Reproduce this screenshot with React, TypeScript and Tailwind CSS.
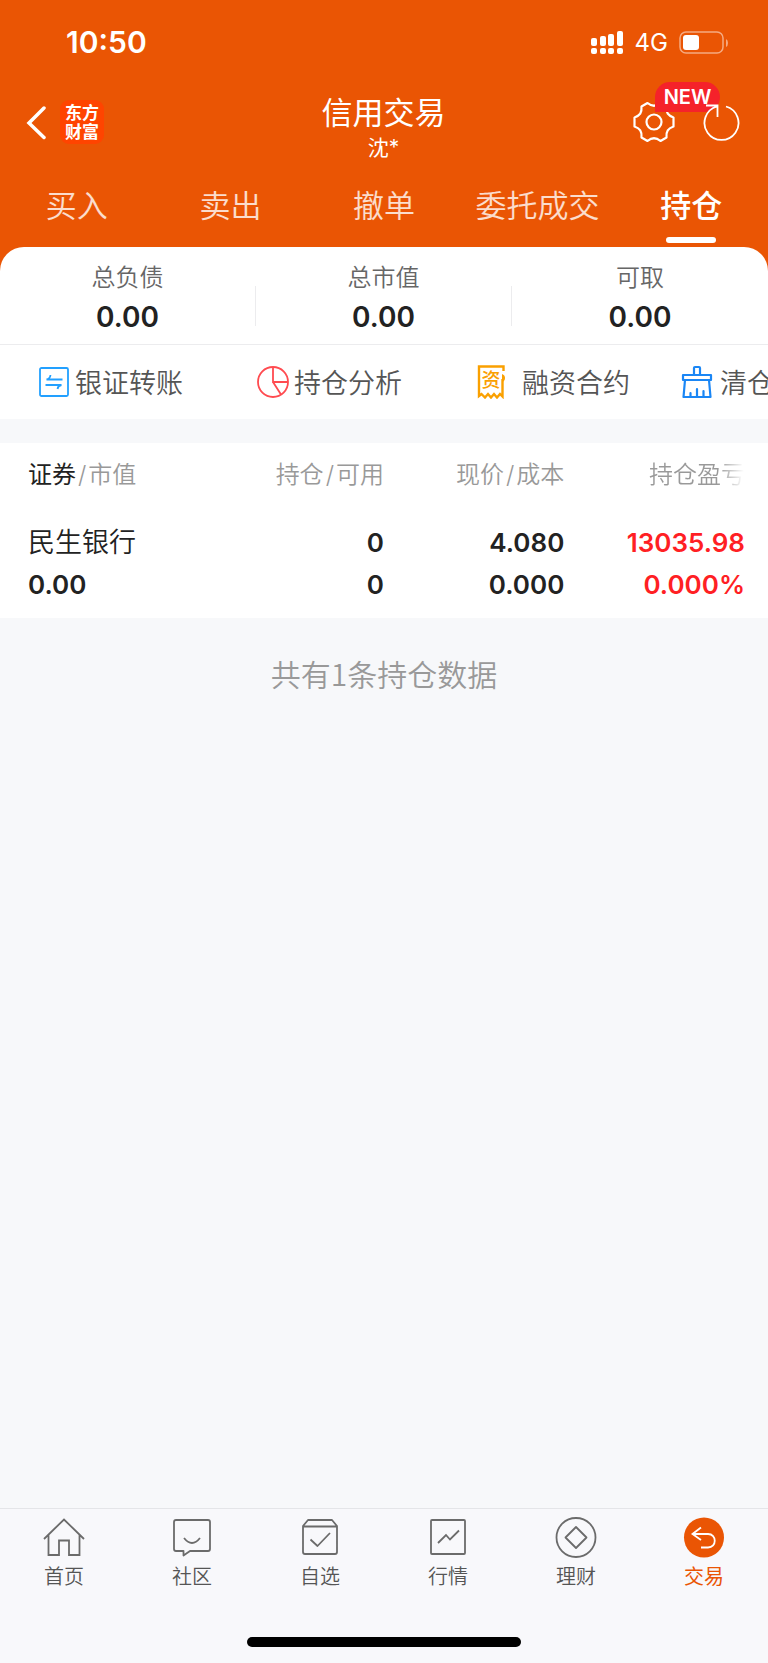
import { useState } from "react";

const tabs = ["买入", "卖出", "撤单", "委托成交", "持仓"];

const totais = [
    { nome: "总负债", valor: "0.00" },
    { nome: "总市值", valor: "0.00" },
    { nome: "可取", valor: "0.00" },
];

const IconTransfer = () => (
    <svg width="30" height="30" viewBox="0 0 30 30" fill="none" stroke="#22a0ff" strokeWidth="1.8">
        <rect x="1" y="1" width="28" height="28" rx="1.5" />
        <path d="M23.500 12.500H7.500Q11 12 11.500 8M6.500 18h16Q19 18.500 18.500 22" />
    </svg>
);

const IconPie = () => (
    <svg width="32" height="32" viewBox="0 0 32 32" fill="none" stroke="#ff4b50" strokeWidth="1.8">
        <circle cx="16" cy="16" r="15" />
        <path d="M16 1v15h15M16 16l8 12.500" />
    </svg>
);

const IconContract = () => (
    <svg width="30" height="34" viewBox="0 0 30 34" fill="none" stroke="#faa000" strokeWidth="2.4">
        <path d="M28.500 6V1.500H4V31l2.500-2 3.500 3.500 3-3.500 3 3.500 3-3.500 3 3.500 3-3.500 2.500 2.500V14" />
        <path d="M27 9q3 1 3 4t-3 4z" fill="#faa000" stroke="none" />
        <text x="16" y="22" textAnchor="middle" fontSize="19" fontWeight="500" fill="#faa000" stroke="none">资</text>
    </svg>
);

const IconBrush = () => (
    <svg width="32" height="34" viewBox="0 0 32 34" fill="none" stroke="#1a86f5" strokeWidth="2.2" strokeLinejoin="round" strokeLinecap="round">
        <path d="M13 10V3q0-1 1-1h4q1 0 1 1v7M2 10h28v5H2zM4 15L2.500 32h27L28 15M9.500 32v-4M16 32v-8M22.500 32v-6" />
    </svg>
);

const IconHome = () => (
    <svg width="44" height="44" viewBox="0 0 44 44" fill="none" stroke="#6b6b6b" strokeWidth="1.8">
        <path d="M2 22L22 2.500 42 22M6.500 18v20H17V23.500h10V38h10.500V18" />
    </svg>
);

const IconChat = () => (
    <svg width="44" height="44" viewBox="0 0 44 44" fill="none" stroke="#6b6b6b" strokeWidth="1.8" strokeLinejoin="round">
        <path d="M6 3h32q2 0 2 2v27q0 2-2 2H20l-6.500 4.500V34H6q-2 0-2-2V5q0-2 2-2z" />
        <path d="M14 21q8 10 16 0" />
    </svg>
);

const IconBox = () => (
    <svg width="44" height="44" viewBox="0 0 44 44" fill="none" stroke="#6b6b6b" strokeWidth="1.8" strokeLinejoin="round">
        <path d="M5 9l5-6h24l5 6v26q0 2-2 2H7q-2 0-2-2zM5 9.500h34M12.500 22.500l7 6.500 12.500-13" />
    </svg>
);

const IconChart = () => (
    <svg width="44" height="44" viewBox="0 0 44 44" fill="none" stroke="#6b6b6b" strokeWidth="1.8">
        <rect x="5" y="3" width="34" height="34" rx="1" />
        <path d="M12 26l8-8 4 4.500 9-9" />
    </svg>
);

const IconWealth = () => (
    <svg width="44" height="44" viewBox="0 0 44 44" fill="none" stroke="#6b6b6b" strokeWidth="1.8" strokeLinejoin="round">
        <circle cx="22" cy="20.500" r="19.500" />
        <path d="M22 10l10.500 10.500L22 31 11.500 20.500z" />
    </svg>
);

const IconTrade = () => (
    <svg width="44" height="44" viewBox="0 0 44 44" fill="none" stroke="#fff" strokeWidth="1.800">
        <circle cx="22" cy="20.500" r="20" fill="#ea5504" stroke="none" />
        <path d="M19 10.500L10.500 17l8.500 6M10.500 17H26c9 0 9 13.500 0 13.500h-7" />
    </svg>
);

const atalhos = [
    { nome: "银证转账", icone: <IconTransfer />, classe: "w-[218px] gap-[6px]" },
    { nome: "持仓分析", icone: <IconPie />, classe: "w-[218px] gap-[5px]" },
    { nome: "融资合约", icone: <IconContract />, classe: "w-[206px] gap-[17px]" },
    { nome: "清仓股票", icone: <IconBrush />, classe: "w-[218px] gap-[7px]" },
];

const menu = [
    { nome: "首页", icone: <IconHome /> },
    { nome: "社区", icone: <IconChat /> },
    { nome: "自选", icone: <IconBox /> },
    { nome: "行情", icone: <IconChart /> },
    { nome: "理财", icone: <IconWealth /> },
    { nome: "交易", icone: <IconTrade /> },
];

const StatusBar = () => (
    <div className="flex h-[85px] items-center justify-between pl-[66px] pr-[39px]">
        <span className="text-[30px] font-semibold">10:50</span>
        <div className="flex items-center gap-[11px]">
            <svg width="33" height="24" viewBox="0 0 33 24" fill="#fff">
                <rect x="0" y="7" width="6" height="8" rx="2" />
                <rect x="9" y="5" width="6" height="10" rx="2" />
                <rect x="17" y="3" width="6" height="12" rx="2" />
                <rect x="26" y="0" width="6" height="15" rx="2" />
                <rect x="0" y="17" width="6" height="6" rx="2" />
                <rect x="9" y="17" width="6" height="6" rx="2" />
                <rect x="17" y="17" width="6" height="6" rx="2" />
                <rect x="26" y="17" width="6" height="6" rx="2" />
            </svg>
            <span className="text-2xl">4G</span>
            <svg width="50" height="24" viewBox="0 0 50 24" fill="none">
                <rect x="1" y="1" width="43" height="21" rx="6" stroke="#fff" strokeOpacity="0.5" strokeWidth="1.500" />
                <rect x="4" y="4" width="16" height="15" rx="3" fill="#fff" />
                <path d="M47 8q2 1 2 4t-2 4z" fill="#fff" fillOpacity="0.5" />
            </svg>
        </div>
    </div>
);

const Cabecalho = () => (
    <div className="grid h-[84px] grid-cols-3 items-start pl-[26px] pr-[27px]">
        <div className="flex items-center gap-[14px] pt-[15px]">
            <button type="button" aria-label="返回">
                <svg width="20" height="44" viewBox="0 0 20 44" fill="none" stroke="#fff" strokeWidth="3.500" strokeLinecap="round">
                    <path d="M18 8L3 23l15 14.500" />
                </svg>
            </button>
            <div className="flex size-11 items-center justify-center rounded-[9px] bg-[#ff4400] pb-[2px] text-center font-['Noto_Sans_CJK_SC',sans-serif] text-[17px] font-bold leading-[19px]">
                东方<br />财富
            </div>
        </div>
        <div className="flex flex-col items-center pt-[7px]">
            <h1 className="text-[31px] leading-[42px]">信用交易</h1>
            <p className="text-[21px] leading-[28px]">沈*</p>
        </div>
        <div className="flex justify-end gap-[27px] pt-[15px]">
            <button type="button" aria-label="设置" className="relative">
                <svg width="44" height="44" viewBox="-22 -22 44 44" fill="none" stroke="#fff" strokeWidth="2.200" strokeLinejoin="round">
                    <path d="M-6.500-19Q0-13.500 6.500-19L12.500-15.500C12-9 14-6.500 19.500-4.500V4.500C14 6.500 12 9 12.500 15.500L6.500 19Q0 13.500-6.500 19L-12.500 15.500C-12 9-14 6.500-19.500 4.500V-4.500C-14-6.500-12-9-12.500-15.500Z" />
                    <circle r="7.500" />
                </svg>
                <span className="absolute -top-[18px] left-[23px] flex h-[30px] w-[65px] items-center justify-center rounded-[15px] rounded-bl-none bg-[#f5222a] text-[20px] font-semibold">NEW</span>
            </button>
            <button type="button" aria-label="刷新" className="relative">
                <svg width="38" height="44" viewBox="0 0 38 44" fill="none" stroke="#fff" strokeWidth="1.800">
                    <path d="M23 6.500A17 17 0 1 1 14 6.500M3 5.500h11.500V17" />
                </svg>
            </button>
        </div>
    </div>
);

const App = () => {
    const [ativa, setAtiva] = useState("持仓");

    return (
        <div className="flex min-h-screen flex-col bg-[#f7f8fa] font-['Inter','Noto_Sans_CJK_SC',sans-serif] font-normal text-[#222]">
            <header className="bg-[#ea5504] text-white">
                <StatusBar />
                <Cabecalho />
                <nav className="flex h-[78px]">
                    {tabs.map((tab) => (
                        <button
                            key={tab}
                            type="button"
                            onClick={() => setAtiva(tab)}
                            className={`flex flex-1 basis-0 flex-col items-center justify-between whitespace-nowrap pb-1 pt-[15px] text-[31px] leading-[44px] ${tab === ativa ? "font-medium" : "font-[350] text-white/80"}`}
                        >
                            {tab}
                            {tab === ativa && <span className="h-[6px] w-[50px] rounded-full bg-white" />}
                        </button>
                    ))}
                </nav>
            </header>

            <div className="bg-[#ea5504]">
                <section className="flex h-[98px] rounded-t-3xl border-b border-[#ececee] bg-white">
                    {totais.map((total, key) => (
                        <div key={key} className="flex flex-1 items-center">
                            <dl className="flex-1 pt-[3px] text-center">
                                <dt className="text-2xl leading-[40px] font-[350] text-[#666]">{total.nome}</dt>
                                <dd className="text-[28px] leading-[38px] font-semibold">{total.valor}</dd>
                            </dl>
                            {key < 2 && <span className="mt-5 h-10 w-px bg-[#ececee]" />}
                        </div>
                    ))}
                </section>
            </div>

            <section className="flex h-[74px] items-center overflow-hidden bg-white pl-[39px]">
                {atalhos.map((atalho) => (
                    <button key={atalho.nome} type="button" className={`flex shrink-0 items-center whitespace-nowrap text-[27px] leading-[38px] font-[350] text-[#555] ${atalho.classe}`}>
                        {atalho.icone}
                        <span className="pt-[3px]">{atalho.nome}</span>
                    </button>
                ))}
            </section>

            <section className="mt-6 bg-white pb-3">
                <table className="w-full table-fixed text-right">
                    <thead>
                        <tr className="h-16 text-2xl text-[#999]">
                            <th className="w-[26%] pl-[28px] text-left font-[350]">
                                <span className="font-normal text-[#222]">证券</span><span className="mx-[2px]">/</span>市值
                            </th>
                            <th className="w-[24%] font-[350]">持仓<span className="mx-[2px]">/</span>可用</th>
                            <th className="w-[24%] pr-1 font-[350]">现价<span className="mx-[2px]">/</span>成本</th>
                            <th className="bg-linear-to-r from-[#999] from-75% to-white to-88% bg-clip-text pr-[23px] font-[350] text-transparent">持仓盈亏</th>
                        </tr>
                    </thead>
                    <tbody className="text-[26px] leading-[42px] font-semibold">
                        <tr>
                            <td className="pl-[28px] pt-[15px] text-left text-[27px] font-[350]">民生银行</td>
                            <td className="pt-[15px]">0</td>
                            <td className="pr-1 pt-[15px]">4.080</td>
                            <td className="pr-[23px] pt-[15px] text-[#ff1f24]">13035.98</td>
                        </tr>
                        <tr>
                            <td className="pl-[28px] text-left">0.00</td>
                            <td>0</td>
                            <td className="pr-1">0.000</td>
                            <td className="pr-[23px] text-[#ff1f24]">0.000%</td>
                        </tr>
                    </tbody>
                </table>
            </section>

            <p className="flex-1 pt-[34px] text-center font-['Noto_Sans_CJK_SC',sans-serif] text-[30px] leading-[42px] font-[350] text-[#999]">共有1条持仓数据</p>

            <footer className="border-t border-[#e4e5e8] bg-[#f8f8fb] pb-4">
                <nav className="flex pt-2">
                    {menu.map((item) => (
                        <a key={item.nome} href="#" className={`flex flex-1 flex-col items-center text-xl leading-[32px] ${item.nome === "交易" ? "text-[#ea5504]" : "font-[350] text-[#555]"}`}>
                            {item.icone}
                            {item.nome}
                        </a>
                    ))}
                </nav>
                <div className="mx-auto mt-[44px] h-[10px] w-[274px] rounded-full bg-black" />
            </footer>
        </div>
    );
};

export default App;
